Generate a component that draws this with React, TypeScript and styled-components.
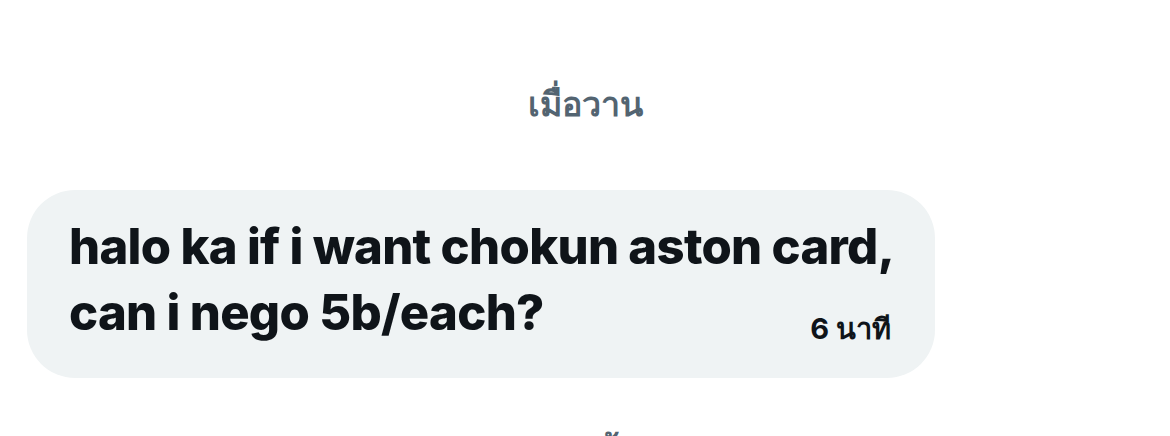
import React from "react";
import styled, { createGlobalStyle } from "styled-components";

const GlobalStyle = createGlobalStyle`
  html, body {
    margin: 0;
    padding: 0;
    background: #ffffff;
    overflow: hidden;
  }
  body {
    font-family: Inter, "Noto Sans", "DejaVu Sans", sans-serif;
    color: #0f1419;
  }
`;

const Thread = styled.main`
  width: 1170px;
  height: 436px;
  display: flex;
  flex-direction: column;
  align-items: stretch;
  overflow: hidden;
`;

const DayLabel = styled.div<{ $top: number }>`
  margin-top: ${(p) => p.$top}px;
  text-align: center;
  font-size: 34px;
  font-weight: 600;
  line-height: 40px;
  color: #536471;
`;

const Row = styled.div`
  display: flex;
  padding-left: 27px;
  margin-top: 66px;
`;

const Bubble = styled.div`
  width: 908px;
  box-sizing: border-box;
  background: #eff3f4;
  border-radius: 48px;
  padding: 24px 44px 32px 42px;
  display: flex;
  flex-direction: column;
`;

const Message = styled.p`
  margin: 0;
  font-size: 49px;
  font-weight: 800;
  line-height: 66px;
  letter-spacing: -0.7px;
  white-space: nowrap;
  color: #0f1419;
`;

const Meta = styled.span`
  align-self: flex-end;
  margin-top: -34px;
  font-size: 29px;
  font-weight: 700;
  line-height: 34px;
  color: #0f1419;
`;

export default function App() {
  return (
    <>
      <GlobalStyle />
      <Thread>
        <DayLabel $top={84}>เมื่อวาน</DayLabel>
        <Row>
          <Bubble>
            <Message>
              halo ka if i want chokun aston card,
              <br />
              can i nego 5b/each?
            </Message>
            <Meta>6 นาที</Meta>
          </Bubble>
        </Row>
        <DayLabel $top={58}>วันนี้</DayLabel>
      </Thread>
    </>
  );
}
